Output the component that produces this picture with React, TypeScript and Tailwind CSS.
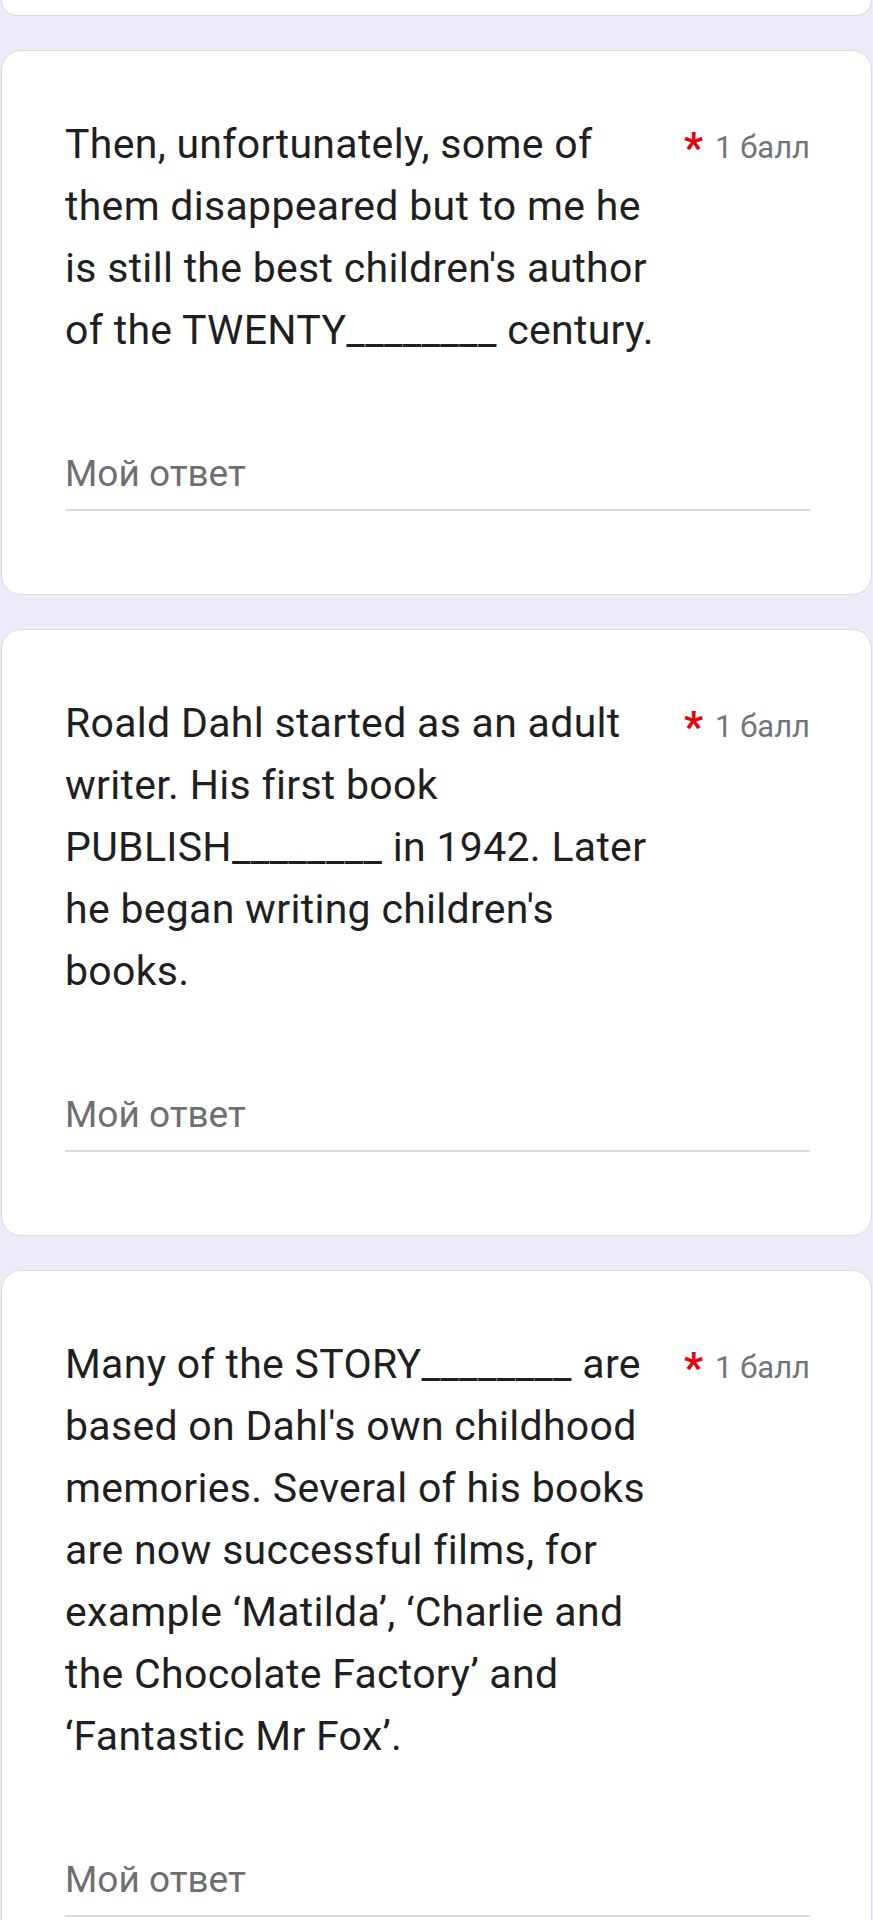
const QUESTIONS = [
  "Then, unfortunately, some of them disappeared but to me he is still the best children's author of the TWENTY________ century.",
  "Roald Dahl started as an adult writer. His first book PUBLISH________ in 1942. Later he began writing children's books.",
  "Many of the STORY________ are based on Dahl's own childhood memories. Several of his books are now successful films, for example \u2018Matilda\u2019, \u2018Charlie and the Chocolate Factory\u2019 and \u2018Fantastic Mr Fox\u2019.",
];

function QuestionCard({ text }: { text: string }) {
  return (
    <div className="mx-[1px] rounded-[20px] border border-[#dadce0] bg-white pb-[83px] pl-[63px] pr-[61px] pt-[62px]">
      <div className="flex items-baseline">
        <div className="min-w-0 flex-1 text-[41px] leading-[62px] tracking-[0.3px] text-[#1f1f1f]">{text}</div>
        <div className="ml-[17px] flex shrink-0 items-baseline">
          <span className="translate-y-[4px] text-[42px] font-bold leading-[40px] text-red-600">*</span>
          <span className="ml-[12px] text-[31px] leading-[40px] text-[#70757a]">1 балл</span>
        </div>
      </div>
      <div className="mt-[91px] text-[37px] leading-[44px] text-[#6f6f6f]">Мой ответ</div>
      <div className="mt-[13px] h-[2px] bg-[#dadada]" />
    </div>
  );
}

export default function App() {
  return (
    <div className="min-h-[1920px] overflow-hidden bg-[#ecebf8] font-['Roboto',sans-serif]">
      <div className="mx-[1px] h-[16px] rounded-b-[20px] border border-t-0 border-[#dadce0] bg-white" />
      <div className="mt-[34px] flex flex-col gap-[34px]">
        {QUESTIONS.map((q) => (
          <QuestionCard key={q} text={q} />
        ))}
      </div>
    </div>
  );
}
